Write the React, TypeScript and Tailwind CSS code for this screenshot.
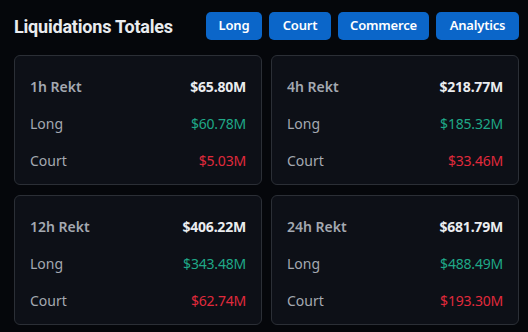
const cards = [
  { label: "1h Rekt", total: "$65.80M", long: "$60.78M", court: "$5.03M" },
  { label: "4h Rekt", total: "$218.77M", long: "$185.32M", court: "$33.46M" },
  { label: "12h Rekt", total: "$406.22M", long: "$343.48M", court: "$62.74M" },
  { label: "24h Rekt", total: "$681.79M", long: "$488.49M", court: "$193.30M" },
];

const tabs = [
  { name: "Long", w: "w-[56px]" },
  { name: "Court", w: "w-[62px]" },
  { name: "Commerce", w: "w-[91px]" },
  { name: "Analytics", w: "w-[83px]" },
];

export default function App() {
  return (
    <main
      className="h-[332px] w-[528px] bg-[#05070b] pl-[14px] pt-[12px]"
      style={{ fontFamily: '"Noto Sans", "DejaVu Sans", sans-serif' }}
    >
      <div className="flex w-[505px] items-center justify-between">
        <h1
          className="text-[18px] font-bold tracking-[-0.2px] text-[#eaecef]"
          style={{ fontFamily: "Roboto, sans-serif" }}
        >
          Liquidations Totales
        </h1>
        <div className="flex gap-[7px]">
          {tabs.map((t) => (
            <button
              key={t.name}
              className={`h-[28px] rounded-[5px] bg-[#0b66c9] text-[13px] font-semibold tracking-[-0.2px] text-white ${t.w}`}
            >
              {t.name}
            </button>
          ))}
        </div>
      </div>

      <div className="mt-[15px] grid w-[505px] grid-cols-2 gap-[9px] gap-y-[10px]">
        {cards.map((c) => (
          <div
            key={c.label}
            className="flex h-[130px] flex-col rounded-[6px] border border-[#2b2f36] bg-[#0d1017] px-[15px] pt-[19px]"
          >
            <div className="flex h-[22px] items-center justify-between text-[14px]">
              <span className="font-semibold text-[#a4a9b1]">{c.label}</span>
              <span className="font-bold tracking-[-0.2px] text-[#eaecef]">{c.total}</span>
            </div>
            <div className="mt-[15px] flex h-[22px] items-center justify-between text-[14px]">
              <span className="text-[#a4a9b1]">Long</span>
              <span className="tracking-[-0.2px] text-[#1fa887]">{c.long}</span>
            </div>
            <div className="mt-[15px] flex h-[22px] items-center justify-between text-[14px]">
              <span className="text-[#a4a9b1]">Court</span>
              <span className="tracking-[-0.2px] text-[#e02a3c]">{c.court}</span>
            </div>
          </div>
        ))}
      </div>
    </main>
  );
}
